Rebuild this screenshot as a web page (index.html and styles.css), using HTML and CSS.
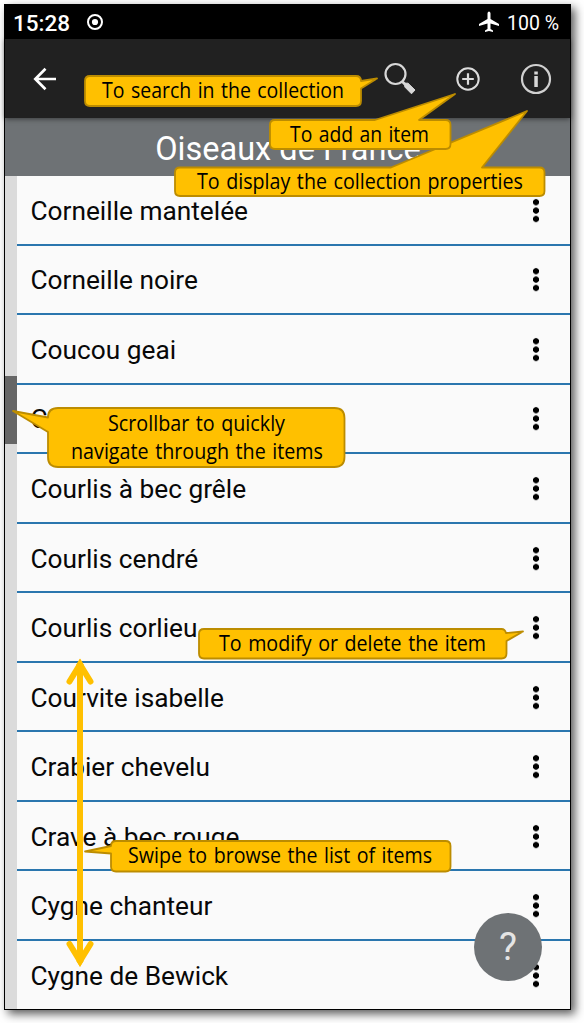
FILE: index.html
```html
<!DOCTYPE html>
<html lang="en">
<head>
<meta charset="utf-8">
<title>Oiseaux de France</title>
<link rel="stylesheet" href="styles.css">
</head>
<body>
<main class="phone">
  <header class="status">
    <span class="clock">15:28</span>
    <svg class="record" width="18" height="18" viewBox="0 0 18 18"><circle cx="9" cy="9" r="7" fill="none" stroke="#fff" stroke-width="2"/><circle cx="9" cy="9" r="3.1" fill="#fff"/></svg>
    <svg class="plane" width="22" height="22" viewBox="1 1 22 22"><path fill="#fff" d="M22 16v-2l-8.500-5V3.500C13.500 2.500 12.800 1.500 12 1.500S10.500 2.500 10.500 3.500V9L2 14v2l8.500-2.500V19L8 20.500V22l4-1 4 1v-1.500L13.500 19v-5.500z"/></svg>
    <span class="battery">100 %</span>
  </header>
  <nav class="toolbar">
    <svg class="back" width="24" height="24" viewBox="0 0 24 24"><path d="M23 12H3M12.500 1.700 2.300 12l10.200 10.300" fill="none" stroke="#fff" stroke-width="2.700"/></svg>
    <svg class="search" width="34" height="34" viewBox="0 0 34 34"><circle cx="12.500" cy="12" r="10" fill="none" stroke="#d8d8d8" stroke-width="2.200"/><path d="m19.200 19.500 4 4" stroke="#d8d8d8" stroke-width="2.600"/><path d="M21.800 21.200 25 21.200 32 28 28.500 31.800 21.800 25z" fill="#d8d8d8" stroke="#d8d8d8" stroke-width="1" stroke-linejoin="round"/></svg>
    <svg class="add" width="26" height="26" viewBox="0 0 26 26"><circle cx="13" cy="13" r="10.700" fill="none" stroke="#dcdcdc" stroke-width="2"/><path d="M13 7.200v11.600M7.200 13h11.600" stroke="#dcdcdc" stroke-width="2.200"/></svg>
    <svg class="info" width="32" height="32" viewBox="0 0 32 32"><circle cx="16" cy="16" r="14" fill="none" stroke="#d0d0d0" stroke-width="2.200"/><path d="M14.300 8.500h3.500v3h-3.500zM14.300 13h3.500v11h-3.500z" fill="#d8d8d8"/></svg>
  </nav>
  <h1 class="title">Oiseaux de France</h1>
  <section class="content">
    <div class="scrollbar"><div class="thumb"></div></div>
    <ul class="list">
      <li class="item"><span>Corneille mantelée</span><i class="more"></i></li>
      <li class="item"><span>Corneille noire</span><i class="more"></i></li>
      <li class="item"><span>Coucou geai</span><i class="more"></i></li>
      <li class="item"><span>Coucou gris</span><i class="more"></i></li>
      <li class="item"><span>Courlis à bec grêle</span><i class="more"></i></li>
      <li class="item"><span>Courlis cendré</span><i class="more"></i></li>
      <li class="item"><span>Courlis corlieu</span><i class="more"></i></li>
      <li class="item"><span>Courvite isabelle</span><i class="more"></i></li>
      <li class="item"><span>Crabier chevelu</span><i class="more"></i></li>
      <li class="item"><span>Crave à bec rouge</span><i class="more"></i></li>
      <li class="item"><span>Cygne chanteur</span><i class="more"></i></li>
      <li class="item"><span>Cygne de Bewick</span><i class="more"></i></li>
    </ul>
  </section>
</main>
<button class="help">?</button>
<svg class="notes" width="584" height="1023" viewBox="0 0 584 1023">
  <g class="swipe">
    <path class="shaft" d="M80 667V959"/>
    <path class="head" d="M69.500 681.500 80 664.500 90.500 681.500M69.500 944 80 961 90.500 944"/>
    <path class="tip" d="M76 665 80 658.500 84 665zM76 960.500 80 967 84 960.500z"/>
  </g>
  <g class="bubbles">
    <path d="M90 76H356Q361 76 361 81L377 78.500 361 88.500V101Q361 106 356 106H90Q85 106 85 101V81Q85 76 90 76Z"/>
    <path d="M180 167.500H391L527 111 482 167.500H539.500Q544.500 167.500 544.500 172.500V191Q544.500 196 539.500 196H180Q175 196 175 191V172.500Q175 167.500 180 167.500Z"/>
    <path d="M275 120H375L455 94 419 120H445.500Q450.500 120 450.500 125V144Q450.500 149 445.500 149H275Q270 149 270 144V125Q270 120 275 120Z"/>
    <path d="M58 408H334.500Q344.500 408 344.500 418V457Q344.500 467 334.500 467H58Q48 467 48 457V432L13 411 48 417.500Q48 408 58 408Z"/>
    <path d="M204 629H501.500Q505 629 506 633L523 631.500 506.500 641V653.500Q506.500 658.500 501.500 658.500H204Q199 658.500 199 653.500V634Q199 629 204 629Z"/>
    <path d="M116 841H445.500Q450.500 841 450.500 846V866.500Q450.500 871.500 445.500 871.500H116Q111 871.500 111 866.500V853.500L85 851.500 111 846Q111 841 116 841Z"/>
  </g>
  <g class="labels">
    <text x="102" y="98" textLength="242" lengthAdjust="spacingAndGlyphs">To search in the collection</text>
    <text x="290" y="142" textLength="139" lengthAdjust="spacingAndGlyphs">To add an item</text>
    <text x="197" y="189" textLength="326" lengthAdjust="spacingAndGlyphs">To display the collection properties</text>
    <text x="108" y="431" textLength="177" lengthAdjust="spacingAndGlyphs">Scrollbar to quickly</text>
    <text x="71" y="459" textLength="252" lengthAdjust="spacingAndGlyphs">navigate through the items</text>
    <text x="219" y="651" textLength="267" lengthAdjust="spacingAndGlyphs">To modify or delete the item</text>
    <text x="128" y="863" textLength="304" lengthAdjust="spacingAndGlyphs">Swipe to browse the list of items</text>
  </g>
</svg>
</body>
</html>
```
FILE: styles.css
```css
* { box-sizing: border-box; }
body {
  margin: 0;
  padding: 4px;
  height: 1023px;
  position: relative;
  overflow: hidden;
  background: #fff;
  font-family: Roboto, sans-serif;
}
.phone {
  width: 567px;
  height: 1006px;
  display: flex;
  flex-direction: column;
  border: 1px solid #000;
  background: #fafafa;
  box-shadow: 4px 4px 9px rgba(0, 0, 0, .65);
}
.status {
  height: 34px;
  flex: none;
  display: flex;
  align-items: center;
  padding: 0 12px 0 8px;
  background: #000;
  color: #fff;
}
.clock { font-size: 22.5px; font-weight: 500; width: 57px; padding-top: 2px; }
.record { margin-left: 16px; }
.plane { margin-left: auto; }
.battery { width: 51px; margin-left: 7px; font-size: 19.5px; white-space: nowrap; padding-top: 2px; }
.toolbar {
  height: 79px;
  flex: none;
  display: flex;
  align-items: center;
  padding: 0 18px 0 28px;
  background: #212121;
  position: relative;
  box-shadow: 0 1px 5px rgba(0, 0, 0, .5);
}
.search { margin-left: auto; }
.add { margin-left: 38px; }
.info { margin-left: 39px; }
.title {
  height: 58px;
  flex: none;
  margin: 0;
  padding: 2px 0 0 1px;
  background: #6e7275;
  color: #fff;
  font-size: 32.5px;
  font-weight: 400;
  line-height: 58px;
  text-align: center;
}
.content { flex: 1; min-height: 0; display: flex; overflow: hidden; }
.scrollbar { width: 11.5px; flex: none; background: #dbdbdb; padding-top: 200px; }
.thumb { height: 68px; background: #666; }
.list { flex: 1; margin: 0; padding: 0; list-style: none; }
.item {
  height: 69.55px;
  display: flex;
  align-items: center;
  justify-content: space-between;
  padding: 0 30px 0 14px;
  background: linear-gradient(#2a76ae, #2a76ae) 0 100% / 100% 2px no-repeat;
  color: #080808;
  font-size: 26.25px;
}
.more {
  width: 8px;
  height: 26px;
  background: radial-gradient(circle, #000 2.700px, transparent 3.400px) 0 0 / 8px 8.400px;
}
.help {
  position: absolute;
  left: 474px;
  top: 913px;
  width: 68px;
  height: 68px;
  padding: 0;
  border: 0;
  border-radius: 50%;
  background: #6e7275;
  color: #e4e4e4;
  font: 38px/68px Roboto, sans-serif;
}
.notes { position: absolute; left: 0; top: 0; }
.shaft { fill: none; stroke: #ffc000; stroke-width: 6; }
.head { fill: none; stroke: #ffc000; stroke-width: 6; stroke-linecap: round; stroke-linejoin: miter; }
.tip { fill: #ffc000; }
.bubbles path { fill: #ffc000; stroke: #bc8c00; stroke-width: 1.8; stroke-linejoin: round; }
.labels { font: 21px "Open Sans", "Noto Sans", sans-serif; word-spacing: 1.5px; fill: #000; }
```
